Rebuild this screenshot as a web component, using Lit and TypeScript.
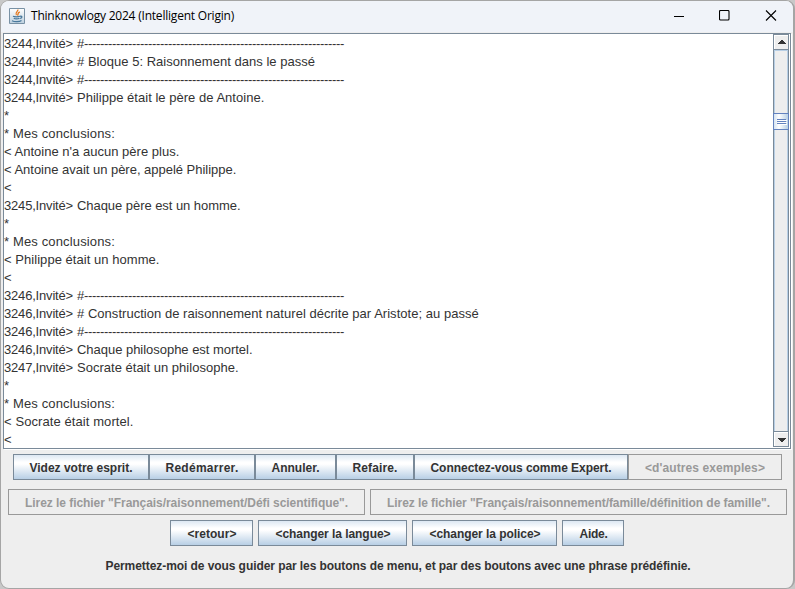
import { LitElement, html, css, svg } from "lit";
import { customElement } from "lit/decorators.js";

// One console row: [prompt, message, message width in px]
type Row = [string, string, number];
type Btn = { label: string; width: number; text: number; disabled?: boolean };

const DASHES = "#" + "-".repeat(65);
const ROWS: Row[] = [
  ["3244,Invité>", DASHES, 267],
  ["3244,Invité>", "# Bloque 5: Raisonnement dans le passé", 238],
  ["3244,Invité>", DASHES, 267],
  ["3244,Invité>", "Philippe était le père de Antoine.", 188],
  ["", "*", 5],
  ["", "* Mes conclusions:", 111],
  ["", "< Antoine n'a aucun père plus.", 176],
  ["", "< Antoine avait un père, appelé Philippe.", 233],
  ["", "<", 8],
  ["3245,Invité>", "Chaque père est un homme.", 163.5],
  ["", "*", 5],
  ["", "* Mes conclusions:", 111],
  ["", "< Philippe était un homme.", 155.5],
  ["", "<", 8],
  ["3246,Invité>", DASHES, 267],
  ["3246,Invité>", "# Construction de raisonnement naturel décrite par Aristote; au passé", 402.5],
  ["3246,Invité>", DASHES, 267],
  ["3246,Invité>", "Chaque philosophe est mortel.", 175.5],
  ["3247,Invité>", "Socrate était un philosophe.", 161.5],
  ["", "*", 5],
  ["", "* Mes conclusions:", 111],
  ["", "< Socrate était mortel.", 129.5],
  ["", "<", 8],
];

const MENU: Btn[] = [
  { label: "Videz votre esprit.", width: 136, text: 103 },
  { label: "Redémarrer.", width: 106, text: 73 },
  { label: "Annuler.", width: 81, text: 48 },
  { label: "Refaire.", width: 78, text: 45 },
  { label: "Connectez-vous comme Expert.", width: 214, text: 181 },
  { label: "<d'autres exemples>", width: 154, text: 120, disabled: true },
];
const FILES: Btn[] = [
  { label: 'Lirez le fichier "Français/raisonnement/Défi scientifique".', width: 357, text: 323, disabled: true },
  { label: 'Lirez le fichier "Français/raisonnement/famille/définition de famille".', width: 417, text: 383, disabled: true },
];
const TOOLS: Btn[] = [
  { label: "<retour>", width: 83, text: 49 },
  { label: "<changer la langue>", width: 149, text: 115 },
  { label: "<changer la police>", width: 145, text: 111 },
  { label: "Aide.", width: 62, text: 28 },
];

const ctx = document.createElement("canvas").getContext("2d")!;
const REGULAR = '13px "Liberation Sans"';
const BOLD = 'bold 12px "Liberation Sans"';

// Letter spacing that makes a text run take the given width.
function spacing(text: string, width: number, font: string): string {
  ctx.font = font;
  const natural = ctx.measureText(text).width;
  return `letter-spacing:${((width - natural) / text.length).toFixed(3)}px`;
}

@customElement("app-root")
export class AppRoot extends LitElement {
  static styles = css`
    :host { display: block; width: 795px; height: 589px; background: #c8c8c8; overflow: hidden; }
    * { box-sizing: border-box; }
    .window {
      width: 795px; height: 589px; border: 1px solid #a5a5a5; border-width: 1px 2px 1px 1px;
      border-radius: 9px; background: #eee; overflow: hidden; display: flex; flex-direction: column;
      font-family: "Liberation Sans", Arial, sans-serif; color: #333;
    }
    .title { height: 31px; flex: none; background: #f0f3f9; display: flex; align-items: center; color: #000; padding: 0 16px 2px 8px; }
    .title svg { display: block; flex: none; }
    .name { font: 12px "Open Sans", "Noto Sans", sans-serif; margin-left: 6px; flex: 1; white-space: nowrap; }
    .controls { display: flex; gap: 34px; }
    .pane {
      height: 416px; margin: 1px 2px 1px 2px; flex: none; display: flex; background: #fff;
      border: 1px solid #7a8a99; overflow: hidden; box-shadow: 1px 1px 0 #fff;
    }
    .console { flex: 1; padding-top: 1px; font-size: 13px; overflow: hidden; }
    .row { height: 18px; line-height: 18px; white-space: pre; display: flex; }
    .prompt { width: 73px; flex: none; }
    .bar { width: 17px; flex: none; display: block; }
    .buttons { display: flex; justify-content: center; height: 26px; flex: none; }
    .menu { margin-top: 4px; }
    .files { margin-top: 9px; gap: 5px; }
    .tools { margin-top: 5px; gap: 5px; }
    .btn {
      flex: none; height: 26px; padding: 2px 0 0 1px; margin: 0; border: 1px solid #7a8a99; border-radius: 0;
      font: bold 12px "Liberation Sans", Arial, sans-serif; color: #333; white-space: nowrap;
      background: linear-gradient(#dde8f3 0%, #fff 30%, #fff 38%, #b8cfe5 100%);
    }
    .btn:disabled { color: #999; border-color: #999; background: #eee; }
    .hint { margin-top: 13px; padding-left: 2px; text-align: center; font: bold 12px/14px "Liberation Sans", Arial, sans-serif; white-space: nowrap; }
  `;

  private fitted(text: string, width: number, font: string) {
    return html`<span style=${spacing(text, width, font)}>${text}</span>`;
  }

  private buttons(kind: string, list: Btn[]) {
    return html`<div class="buttons ${kind}">
      ${list.map((b) => html`<button class="btn" style="width:${b.width}px" ?disabled=${b.disabled}>${this.fitted(b.label, b.text, BOLD)}</button>`)}
    </div>`;
  }

  private scrollbar() {
    return svg`<svg class="bar" width="17" height="414" viewBox="0 0 17 414" shape-rendering="crispEdges">
      <defs><linearGradient id="thumb" x1="0" x2="1"><stop offset="0" stop-color="#d5e3f1"/><stop offset=".35" stop-color="#fff"/><stop offset="1" stop-color="#b8cfe5"/></linearGradient></defs>
      <path fill="#eee" d="M0 0h17v414H0z"/>
      <path fill="#7a8a99" d="M0 0h1v413H0zM0 0h16v1H0zM15 0h1v413h-1zM1 15h14v1H1zM1 397h14v1H1zM0 412h16v1H0z"/>
      <path fill="#b8cfe5" d="M1 16h1v381H1zM1 16h14v1H1zM14 17h1v380h-1z"/>
      <path fill="#fff" d="M1 1h14v1H1zM1 1h1v14H1zM1 398h14v1H1zM1 398h1v14H1zM16 0h1v414h-1zM0 413h17v1H0z"/>
      <path fill="#333" d="M8 6h2v1H8zM7 7h4v1H7zM6 8h6v1H6zM5 9h8v1H5zM5 404h8v1H5zM6 405h6v1H6zM7 406h4v1H7zM8 407h2v1H8z"/>
      <path fill="url(#thumb)" d="M1 80h14v15H1z"/>
      <path fill="#6382bf" d="M0 79h16v1H0zM0 95h16v1H0zM0 79h1v17H0zM15 79h1v17h-1z"/>
      <path fill="#fff" d="M5 86h9v1H5zM5 88h9v1H5zM5 90h9v1H5z"/>
      <path fill="#6382bf" d="M4 85h9v1H4zM4 87h9v1H4zM4 89h9v1H4z"/>
    </svg>`;
  }

  render() {
    return html`<div class="window">
      <div class="title">
        <svg width="16" height="16" viewBox="0 0 16 16" fill="none">
          <defs><linearGradient id="tile" x2="0" y2="1"><stop stop-color="#fff"/><stop offset="1" stop-color="#bdd0df"/></linearGradient></defs>
          <path fill="url(#tile)" stroke="#7891a5" d="M.5.5h15v15H.5z"/>
          <path stroke="#e5781e" stroke-width="1.300" d="M8.800 1.500c1 2-3.500 2.700-1.400 5.700M10.800 3.800C8 5 9.800 6 8.400 7.500"/>
          <path stroke="#49789c" stroke-width="1.200" d="M4 8.300c1.300.7 5.500.7 6.800 0M4.800 10.300c1.200.8 4.200.8 5.500 0M3 12.700c2.500 1.300 7.500 1.200 9.500-.2M11 8.300c2.800-.6 2.300 1.900-.2 2.200"/>
        </svg>
        <div class="name">${this.fitted("Thinknowlogy 2024 (Intelligent Origin)", 203, '12px "Open Sans"')}</div>
        <div class="controls">
          <svg width="12" height="12" viewBox="0 0 12 12"><path stroke="#000" d="M1 6.500h10"/></svg>
          <svg width="12" height="12" viewBox="0 0 12 12" fill="none"><rect x=".5" y=".5" width="9.500" height="9.500" rx="1" stroke="#000" stroke-width="1.100"/></svg>
          <svg width="12" height="12" viewBox="0 0 12 12"><path stroke="#000" stroke-width="1.100" d="m1 .5 10 10M11 .5l-10 10"/></svg>
        </div>
      </div>
      <div class="pane">
        <div class="console">
          ${ROWS.map(([p, m, w]) => html`<div class="row">${p ? html`<span class="prompt">${this.fitted(p, 69, REGULAR)}</span>` : ""}${this.fitted(m, w, REGULAR)}</div>`)}
        </div>
        ${this.scrollbar()}
      </div>
      ${this.buttons("menu", MENU)} ${this.buttons("files", FILES)} ${this.buttons("tools", TOOLS)}
      <div class="hint">${this.fitted("Permettez-moi de vous guider par les boutons de menu, et par des boutons avec une phrase prédéfinie.", 585, BOLD)}</div>
    </div>`;
  }
}
